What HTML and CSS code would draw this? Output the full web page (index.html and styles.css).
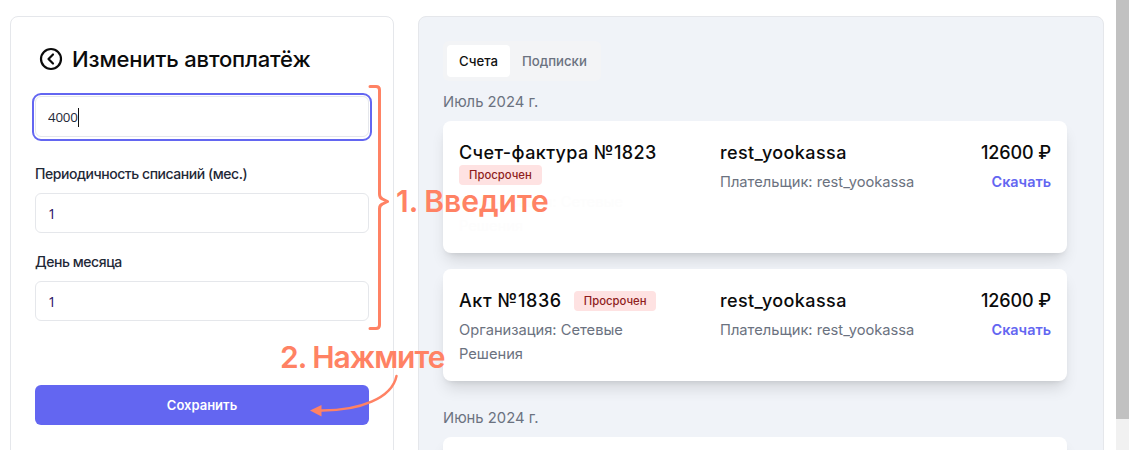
FILE: index.html
```html
<!DOCTYPE html>
<html lang="ru">
<head>
<meta charset="utf-8">
<title>Изменить автоплатёж</title>
<link rel="stylesheet" href="styles.css">
</head>
<body>
<div class="app">
  <main class="page">
    <section class="form-panel">
      <header class="form-head">
        <svg class="back" width="24" height="24" viewBox="0 0 24 24" fill="none" stroke="#0b0b0b" stroke-width="2.200" stroke-linecap="round" stroke-linejoin="round"><circle cx="12" cy="12" r="10"/><path d="M14 7.500 9.500 12l4.500 4.500"/></svg>
        <h1>Изменить автоплатёж</h1>
      </header>
      <div class="focus-ring">
        <div class="input-wrap">
          <input class="field dark" value="4000">
          <span class="caret"></span>
        </div>
      </div>
      <label class="label first-label">Периодичность списаний (мес.)</label>
      <input class="field" value="1">
      <label class="label">День месяца</label>
      <input class="field" value="1">
      <button class="save">Сохранить</button>
    </section>
    <section class="list-panel">
      <div class="tabs">
        <span class="tab active">Счета</span>
        <span class="tab">Подписки</span>
      </div>
      <h2 class="month">Июль 2024 г.</h2>
      <article class="card">
        <div class="col-main">
          <div class="title stacked">Счет-фактура №1823</div>
          <span class="badge">Просрочен</span>
          <div class="org ghost">Организация: Сетевые Решения</div>
        </div>
        <div class="col-mid">
          <div class="title">rest_yookassa</div>
          <div class="sub">Плательщик: rest_yookassa</div>
        </div>
        <div class="col-end">
          <div class="title sum">12600 ₽</div>
          <a class="link">Скачать</a>
        </div>
      </article>
      <article class="card">
        <div class="col-main">
          <div class="title-row">
            <div class="title">Акт №1836</div>
            <span class="badge">Просрочен</span>
          </div>
          <div class="org">Организация: Сетевые Решения</div>
        </div>
        <div class="col-mid">
          <div class="title">rest_yookassa</div>
          <div class="sub">Плательщик: rest_yookassa</div>
        </div>
        <div class="col-end">
          <div class="title sum">12600 ₽</div>
          <a class="link">Скачать</a>
        </div>
      </article>
      <h2 class="month month-next">Июнь 2024 г.</h2>
      <article class="card card-next"></article>
    </section>
  </main>
  <div class="scrollbar"><div class="thumb"></div></div>

  <svg class="marks" width="1129" height="450" viewBox="0 0 1129 450" fill="none">
    <path d="M370 86.500h6q3.500 0 3.500 3.500v104q0 4 3 5l5 2.500-5 2.500q-3 1-3 5v116q0 3.500-3.500 3.500h-6" stroke="#ff8264" stroke-width="3" stroke-linecap="round" stroke-linejoin="round"/>
    <path d="M396.500 376C392 398 360 411 320 410.500" stroke="#ff8264" stroke-width="2.500" stroke-linecap="round"/>
    <path d="M310 410.500 321.500 405v11.500z" fill="#ff8264"/>
  </svg>
  <div class="note note-one">1. Введите</div>
  <div class="note note-two">2. Нажмите</div>
</div>
</body>
</html>
```
FILE: styles.css
```css
* { box-sizing: border-box; }
html, body { margin: 0; height: 100%; overflow: hidden; background: #fff; }
body { font-family: Inter, "Noto Sans", sans-serif; color: #111; }
.app { position: relative; display: flex; height: 450px; overflow: hidden; }
.page { flex: 1; display: flex; gap: 24px; padding: 16px 12px 0 10px; min-width: 0; }

.form-panel { width: 384px; height: 600px; flex: none; border: 1px solid #e5e7eb; border-radius: 8px; padding: 24px; display: flex; flex-direction: column; align-items: stretch; }
.form-head { display: flex; align-items: center; gap: 9px; height: 36px; padding-left: 4px; margin-bottom: 16px; }
.back { flex: none; }
h1 { margin: 0; font-size: 22px; font-weight: 500; line-height: 36px; color: #0b0b0b; letter-spacing: -0.15px; }
.focus-ring { margin: 0 -3px; border: 2px solid #6366f1; border-radius: 9px; padding: 1px; height: 48px; flex: none; }
.input-wrap { position: relative; }
.field { display: block; width: 100%; height: 40px; flex: none; border: 1px solid #e5e7eb; border-radius: 6px; padding: 0 12px; font: 400 14px/20px "Open Sans", Arial, sans-serif; color: #240a5e; background: #fff; outline: 0; }
.dark { color: #1f2937; font-size: 13.333px; letter-spacing: -0.2px; height: 41px; }
.caret { position: absolute; left: 43px; top: 12px; width: 1px; height: 19px; background: #111; }
.label { display: block; font-size: 14px; letter-spacing: -0.45px; line-height: 20px; font-weight: 500; color: #1f2937; margin: 19px 0 9px; }
.first-label { margin-top: 23px; }
.save { margin-top: 64px; height: 40px; flex: none; border: 0; border-radius: 6px; background: #6366f1; color: #fff; font: 600 13px/20px Inter, sans-serif; }

.list-panel { flex: 1; height: 600px; background: #f0f3f8; border: 1px solid #e5e7eb; border-radius: 8px; padding: 24px 36px 0 24px; min-width: 0; }
.tabs { display: inline-flex; padding: 4px 2px 4px 4px; background: #f3f4f6; border-radius: 6px; vertical-align: top; }
.tab { height: 32px; padding: 0 12px; font-size: 13.200px; line-height: 32px; font-weight: 500; color: #6b7280; border-radius: 4px; }
.active { background: #fff; color: #111; }
.month { margin: 9px 0 7px; font-size: 14.800px; line-height: 24px; font-weight: 400; color: #6b7280; }
.month-next { margin: 25px 0 7px; }
.card { display: flex; height: 132px; background: #fff; border-radius: 8px; padding: 16px; margin-bottom: 16px; box-shadow: 0 10px 15px -3px rgba(0,0,0,.12), 0 4px 6px -4px rgba(0,0,0,.12); }
.card + .card { height: 112px; }
.card.card-next { height: 120px; }
.col-main { width: 261px; flex: none; }
.col-mid { flex: 1; }
.col-end { text-align: right; }
.title { font-size: 18px; line-height: 32px; font-weight: 500; color: #0b0b0b; letter-spacing: 0.4px; }
.sum { letter-spacing: -0.1px; }
.title-row { display: flex; align-items: center; gap: 12px; }
.title-row .title { letter-spacing: 0.6px; }
.stacked { margin-bottom: -4px; }
.col-main > .badge { display: block; width: max-content; }
.badge { height: 20px; padding: 0 10px; background: #fee2e2; color: #8f1d1d; border-radius: 4px; font-size: 11.300px; line-height: 20px; font-weight: 500; }
.org, .sub { font-size: 14.700px; line-height: 24px; color: #6b7280; }
.org { width: 200px; position: relative; top: 1px; }
.sub { position: relative; top: 1px; }
.ghost { color: #fdfdfd; margin-top: 4px; }
.link { display: block; position: relative; top: 1px; font-size: 14.400px; line-height: 24px; font-weight: 600; color: #6366f1; }

.scrollbar { width: 13px; flex: none; background: #f1f1f1; }
.thumb { height: 419px; background: #c1c1c1; }

.marks { position: absolute; left: 0; top: 0; pointer-events: none; }
.note { position: absolute; color: #ff8264; font-size: 30px; line-height: 36px; font-weight: 600; white-space: nowrap; }
.note-one { left: 396px; top: 183px; word-spacing: -1px; }
.note-two { left: 280px; top: 339px; letter-spacing: -1px; }
```
